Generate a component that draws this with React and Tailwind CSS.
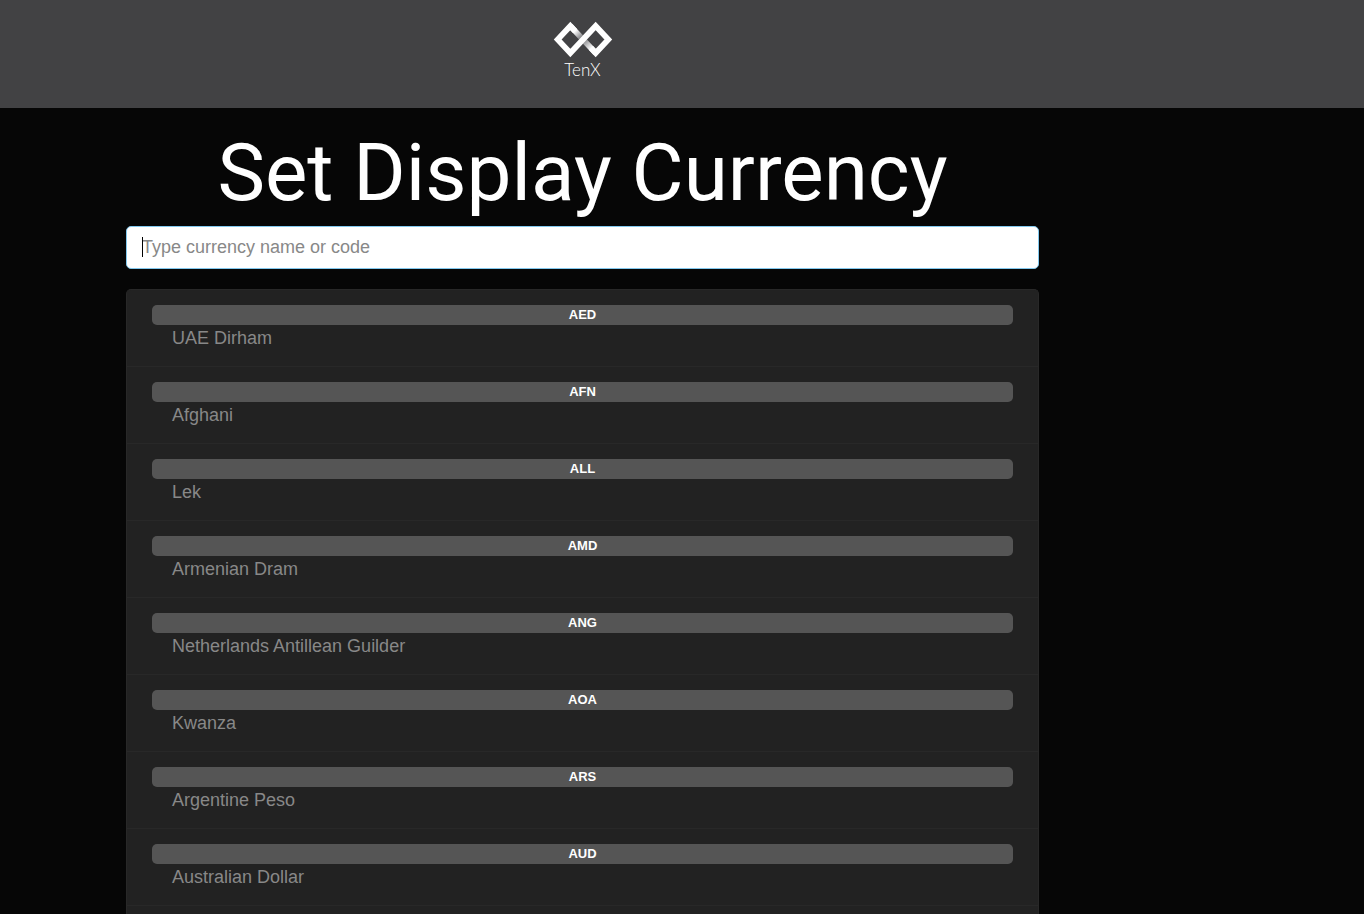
import React, { useState } from "react";

const currencies = [
  { code: "AED", name: "UAE Dirham" },
  { code: "AFN", name: "Afghani" },
  { code: "ALL", name: "Lek" },
  { code: "AMD", name: "Armenian Dram" },
  { code: "ANG", name: "Netherlands Antillean Guilder" },
  { code: "AOA", name: "Kwanza" },
  { code: "ARS", name: "Argentine Peso" },
  { code: "AUD", name: "Australian Dollar" },
];

const Logo = () => (
  <a href="#home" className="flex flex-col items-center text-white">
    <svg viewBox="0 0 180 114" className="h-[38px] w-[60px]" aria-hidden="true">
      <defs>
        <linearGradient
          id="fold"
          gradientUnits="userSpaceOnUse"
          x1="66"
          y1="33"
          x2="116"
          y2="86"
        >
          <stop offset="0" stopColor="#ffffff" />
          <stop offset="0.4" stopColor="#77777a" />
          <stop offset="0.6" stopColor="#99999b" />
          <stop offset="1" stopColor="#ffffff" />
        </linearGradient>
      </defs>
      <path
        d="M52 18 L128 99"
        fill="none"
        stroke="url(#fold)"
        strokeWidth="17"
      />
      <path
        d="M66 33 L52 18 L14 58.5 L52 99 L128 18 L166 58.5 L128 99 L114 84"
        fill="none"
        stroke="#ffffff"
        strokeWidth="17"
        strokeMiterlimit="10"
      />
    </svg>
    <span className="font-[Lato,sans-serif] text-[17px] leading-6 font-light">
      TenX
    </span>
  </a>
);

const App = () => {
  const [search, setSearch] = useState("");

  const term = search.trim().toLowerCase();
  const results = currencies.filter(
    ({ code, name }) =>
      code.toLowerCase().includes(term) || name.toLowerCase().includes(term)
  );

  return (
    <div className="flex min-h-screen flex-col bg-[#060606] font-['Liberation_Sans',Arial,sans-serif]">
      <header className="bg-[#424244]">
        <div className="flex h-[108px] w-full max-w-[1165px] justify-center pt-5">
          <Logo />
        </div>
      </header>
      <main className="flex w-full max-w-[1165px] grow flex-col px-[126px] pt-5">
        <h1 className="text-center font-[Roboto,sans-serif] text-[80px] leading-[90px] whitespace-nowrap text-white">
          Set Display Currency
        </h1>
        <div className="relative mt-2">
          <input
            type="text"
            autoFocus
            aria-label="Currency"
            placeholder="Type currency name or code"
            value={search}
            onChange={(ev) => setSearch(ev.target.value)}
            className="block h-[43px] w-full rounded-[5px] border border-[#82c8ee] bg-white px-[15px] text-lg text-[#222222] caret-black outline-none placeholder-shown:caret-transparent placeholder:text-[#888888]"
          />
          {/* full height caret while the box is empty */}
          {search === "" && (
            <span className="pointer-events-none absolute top-[11px] left-4 h-5 w-px bg-black" />
          )}
        </div>
        <ul className="mt-5 grow rounded-t-[5px] border-x border-t border-[#282828] bg-[#222222]">
          {results.map(({ code, name }) => (
            <li key={code} className="border-b border-[#282828]">
              <button
                type="button"
                className="block w-full px-[25px] py-[15px] text-left"
              >
                <span className="block rounded-[5px] bg-[#555555] text-center text-[13px] leading-5 font-bold text-white">
                  {code}
                </span>
                <span className="block pl-5 text-lg leading-[26px] text-[#888888]">
                  {name}
                </span>
              </button>
            </li>
          ))}
        </ul>
      </main>
    </div>
  );
};

export default App;
